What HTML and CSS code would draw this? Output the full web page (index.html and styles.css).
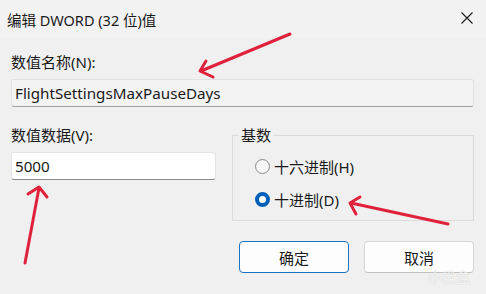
FILE: index.html
```html
<!DOCTYPE html>
<html lang="zh-CN">
<head>
    <meta charset="UTF-8">
    <meta name="viewport" content="width=device-width, initial-scale=1.0">
    <title>编辑 DWORD (32 位)值</title>
    <link rel="stylesheet" href="styles.css">
</head>
<body>
    <div class="dialog">
        <div class="titlebar">
            <span class="title">编辑 DWORD (32 位)值</span>
            <span class="close">
                <svg width="12" height="12" viewBox="0 0 12 12"><path d="M0.5 0.5 L11.5 11.5 M11.5 0.5 L0.5 11.5" stroke="#1b1b1b" stroke-width="1.1" fill="none"/></svg>
            </span>
        </div>

        <div class="content">
            <div class="label">数值名称(N):</div>
            <div class="field readonly">FlightSettingsMaxPauseDays</div>

            <div class="row">
                <div class="col">
                    <div class="label">数值数据(V):</div>
                    <div class="field">5000</div>
                </div>
                <fieldset class="group">
                    <legend>基数</legend>
                    <div class="radio"><span class="dot"></span>十六进制(H)</div>
                    <div class="radio checked"><span class="dot"></span>十进制(D)</div>
                </fieldset>
            </div>

            <div class="buttons">
                <button class="btn primary">确定</button>
                <button class="btn">取消</button>
            </div>
        </div>

        <svg class="arrows" width="486" height="294" viewBox="0 0 486 294">
            <g stroke="#e0213b" stroke-width="3" fill="none" stroke-linecap="round" stroke-linejoin="round">
                <path d="M290 34 L201 71"/>
                <path d="M206 61 L200 71 L213 77"/>
                <path d="M25 263 L39 188"/>
                <path d="M28 194 L39 187 L47 197"/>
                <path d="M448 224 L351 203"/>
                <path d="M360 197 L350 203 L356 214"/>
            </g>
        </svg>
        <div class="watermark">小黑盒</div>
    </div>
</body>
</html>
```

FILE: styles.css
```css
body {
    margin: 0;
    padding: 0;
    background-color: #f0f0f0;
    font-family: "Noto Sans", "Noto Sans CJK SC", sans-serif;
    color: #1a1a1a;
}
.dialog {
    position: relative;
    width: 486px;
    height: 294px;
    overflow: hidden;
    background-color: #f0f0f0;
}
.titlebar {
    display: flex;
    align-items: center;
    justify-content: space-between;
    height: 38px;
    padding: 0 13px 0 7px;
    background-color: #f2f2f2;
}
.title {
    font-size: 14.5px;
}
.close {
    display: flex;
    margin-top: -2px;
}
.content {
    padding: 14px 12px 0 11px;
}
.label {
    font-size: 15px;
    line-height: 20px;
}
.field {
    box-sizing: border-box;
    height: 28px;
    margin-top: 7px;
    padding: 0 3px;
    font-size: 15.2px;
    line-height: 26px;
    background-color: #ffffff;
    border: 1px solid #e3e3e3;
    border-bottom-color: #8c8c8c;
    border-radius: 3px;
}
.field.readonly {
    background-color: #f3f3f3;
    border-color: #e2e2e2;
    border-bottom-color: #a0a0a0;
}
.row {
    display: flex;
    align-items: flex-start;
    gap: 16px;
    margin-top: 18px;
}
.col {
    width: 205px;
}
.group {
    box-sizing: border-box;
    width: 242px;
    margin: 0;
    padding: 9px 0 9px 0;
    border: 1px solid #dcdcdc;
    border-radius: 0;
}
.group legend {
    margin-left: 6px;
    padding: 0 2px;
    font-size: 15px;
    line-height: 20px;
}
.radio {
    display: flex;
    align-items: center;
    height: 24px;
    padding-left: 22px;
    font-size: 15px;
}
.radio + .radio {
    margin-top: 9px;
}
.dot {
    box-sizing: border-box;
    width: 15px;
    height: 15px;
    margin-right: 4px;
    border: 1px solid #8a8a8a;
    border-radius: 50%;
    background-color: #f7f7f7;
}
.radio.checked .dot {
    border: 4.5px solid #005fb8;
    background-color: #ffffff;
}
.buttons {
    display: flex;
    justify-content: flex-end;
    gap: 15px;
    margin-top: 20px;
}
.btn {
    box-sizing: border-box;
    width: 110px;
    height: 32px;
    font-family: inherit;
    font-size: 15px;
    color: #1a1a1a;
    background-color: #fdfdfd;
    border: 1px solid #d5d5d5;
    border-bottom-color: #c2c2c2;
    border-radius: 4px;
}
.btn.primary {
    border: 1px solid #1a73c0;
}
.arrows {
    position: absolute;
    left: 0;
    top: 0;
    pointer-events: none;
}
.watermark {
    position: absolute;
    right: 16px;
    bottom: 8px;
    font-size: 14px;
    color: rgba(255, 255, 255, 0.8);
    text-shadow: 0 0 1px rgba(160, 160, 160, 0.6);
}
```
